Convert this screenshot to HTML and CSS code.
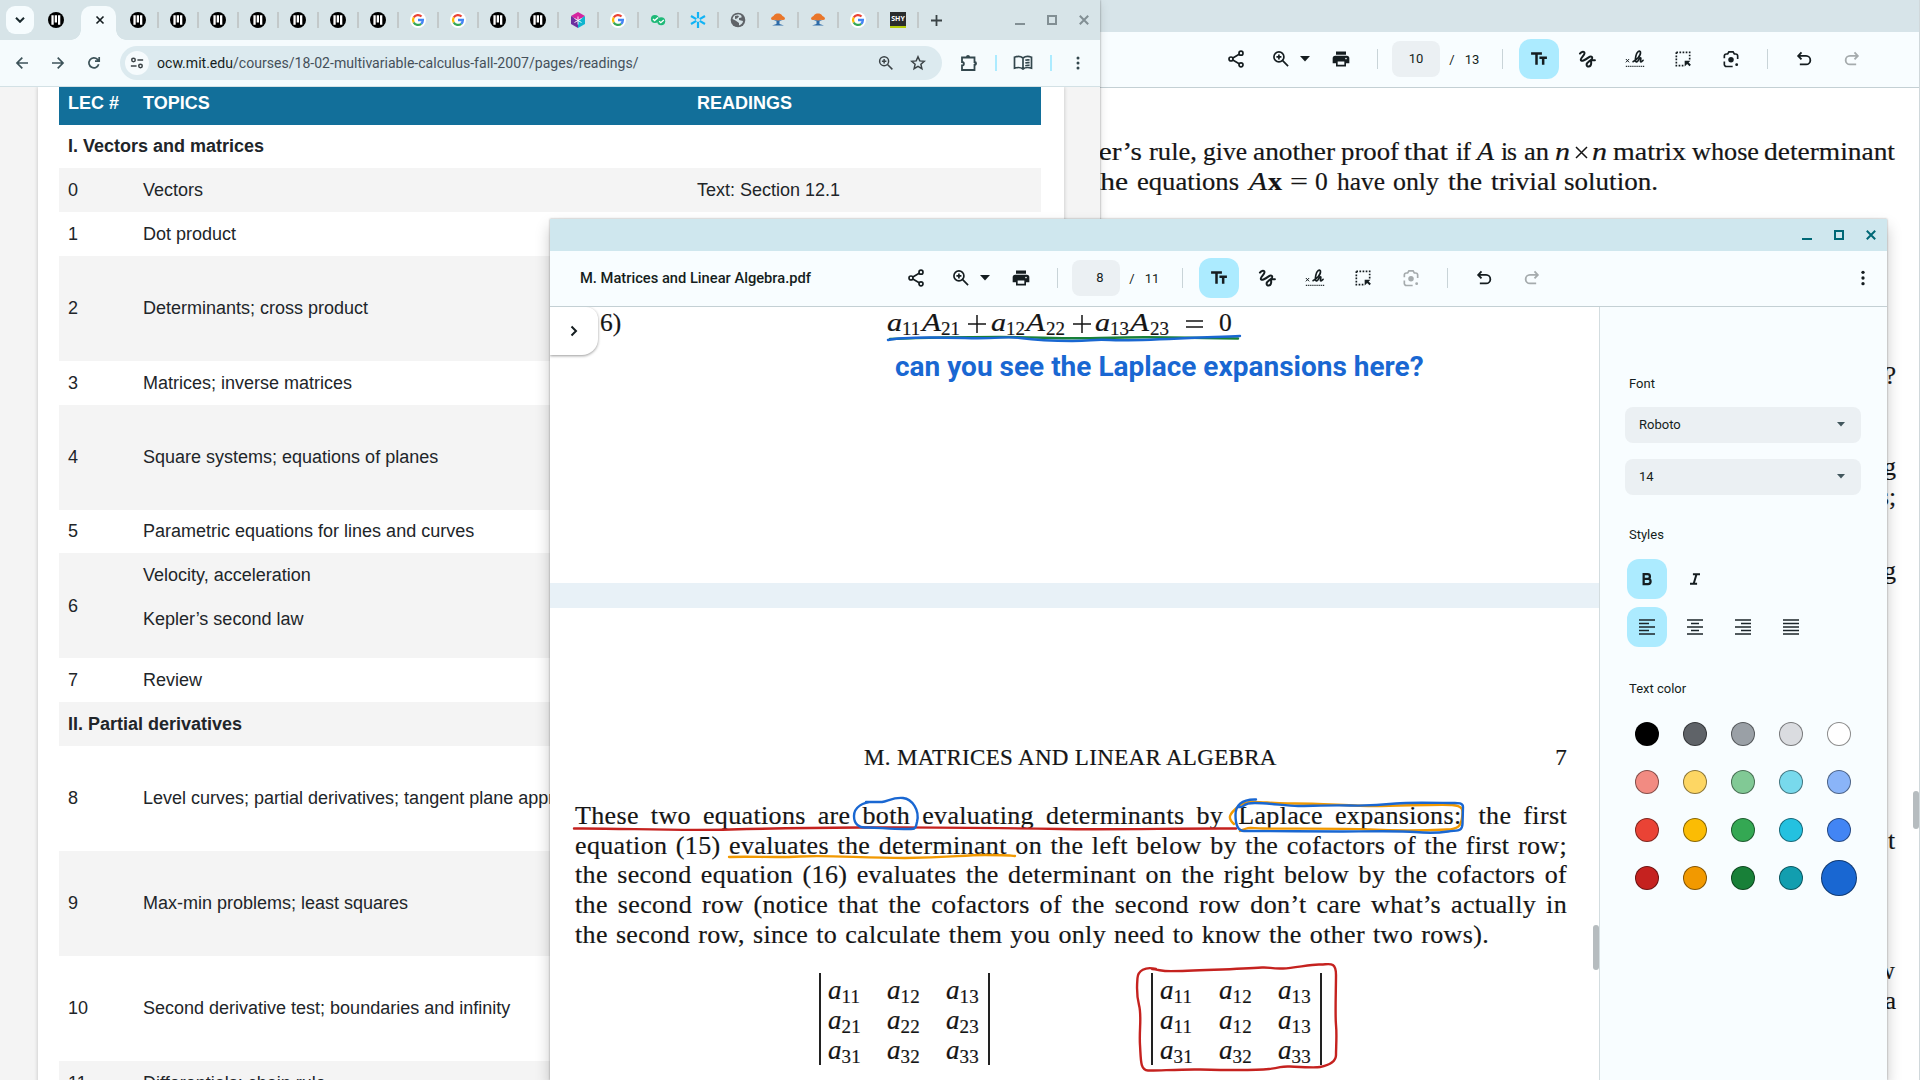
FILE: index.html
```html
<!DOCTYPE html>
<html lang="en">
<head>
<meta charset="utf-8">
<title>Desktop</title>
<link rel="stylesheet" href="styles.css">
</head>
<body>
<svg class="defs" aria-hidden="true">
  <symbol id="share" viewBox="0 0 24 24"><g fill="none" stroke="currentColor" stroke-width="2"><circle cx="18" cy="5" r="2.400"/><circle cx="6" cy="12" r="2.400"/><circle cx="18" cy="19" r="2.400"/><path d="M8.200 10.800l7.600-4.500M8.200 13.200l7.600 4.500"/></g></symbol>
  <symbol id="zoom" viewBox="0 0 24 24"><g fill="none" stroke="currentColor" stroke-width="2"><circle cx="9.500" cy="9.500" r="6"/><path d="M14 14l6.500 6.500M9.500 6.500v6M6.500 9.500h6"/></g></symbol>
  <symbol id="print" viewBox="0 0 24 24"><path fill="currentColor" d="M18 7H6V3h12v4zM19 8H5a3 3 0 0 0-3 3v6h4v4h12v-4h4v-6a3 3 0 0 0-3-3zm-3 11H8v-4h8v4zm2-6.500a1 1 0 1 1 0-2 1 1 0 0 1 0 2z"/></symbol>
  <symbol id="text" viewBox="0 0 24 24"><path fill="currentColor" d="M2.500 4v3h5v12h3V7h5V4h-13zm19 5h-9v3h3v7h3v-7h3V9z"/></symbol>
  <symbol id="ink" viewBox="0 0 24 24"><path fill="none" stroke="currentColor" stroke-width="2.400" stroke-linecap="round" d="M3.500 5.500C5.500 3 9 2.500 9 5c0 2.700-4.500 5.500-4.500 8 0 3 5.500 0 9.500-3 2.500-1.800 5-1 4 1.500C16.500 14.500 11.500 15.500 11.500 19c0 3 5 3 5.500-1.500.2-2-.5-3.500 0-4H21.500"/></symbol>
  <symbol id="sign" viewBox="0 0 24 24"><path fill="none" stroke="currentColor" stroke-width="2" d="M9 15.500c5-2 10.500-8 9.500-12-1-2.500-4.500 0-5.500 5-1 5-.5 7.500 1 7 2-.5 3-5 4.500-5s-1 5 .5 5 1.500-2 3.500-2"/><path fill="none" stroke="currentColor" stroke-width="1.200" d="M1 12l4 4M5 12l-4 4"/><path fill="none" stroke="currentColor" stroke-width="1.500" stroke-dasharray="1.300 1" d="M1 20.800h22"/></symbol>
  <symbol id="select" viewBox="0 0 24 24"><path fill="none" stroke="currentColor" stroke-width="2" stroke-dasharray="2 1.750" d="M4 4h16v9M4 4v16h10"/><path fill="currentColor" d="M14 14h7l-2.300 2.300 2.800 2.700-1.700 1.700-2.800-2.700-3 3z"/></symbol>
  <symbol id="lens" viewBox="0 0 24 24"><g fill="none" stroke="currentColor" stroke-width="2"><path d="M4 11V8.500A2.500 2.500 0 0 1 6.500 6H8l1.500-2.500h5L16 6h1.500A2.500 2.500 0 0 1 20 8.500V12M4 15v3.500A2.500 2.500 0 0 0 6.500 21H14"/></g><circle cx="12" cy="13" r="3.300" fill="currentColor"/><circle cx="18.800" cy="18.800" r="1.700" fill="currentColor"/></symbol>
  <symbol id="undo" viewBox="0 0 24 24"><path fill="none" stroke="currentColor" stroke-width="2.200" d="M9 4L5 8.300l4 4.200M5.500 8.300h9a5 5 0 0 1 0 10.200H7"/></symbol>
  <symbol id="redo" viewBox="0 0 24 24"><path fill="none" stroke="currentColor" stroke-width="2.200" d="M15 4l4 4.300-4 4.200M18.500 8.300h-9a5 5 0 0 0 0 10.200H17"/></symbol>
  <symbol id="caret" viewBox="0 0 10 6"><path fill="currentColor" d="M0 0h10L5 5.500z"/></symbol>
  <symbol id="dots" viewBox="0 0 24 24"><g fill="currentColor"><circle cx="12" cy="5.200" r="2"/><circle cx="12" cy="12" r="2"/><circle cx="12" cy="18.800" r="2"/></g></symbol>
  <symbol id="min" viewBox="0 0 12 12"><path fill="currentColor" d="M1 9h10v2H1z"/></symbol>
  <symbol id="max" viewBox="0 0 12 12"><path fill="none" stroke="currentColor" stroke-width="2" d="M2 2h8v8H2z"/></symbol>
  <symbol id="close" viewBox="0 0 12 12"><path fill="none" stroke="currentColor" stroke-width="2" d="M1.800 1.800l8.400 8.400M10.200 1.800l-8.400 8.400"/></symbol>
  <symbol id="mit" viewBox="0 0 16 16"><circle cx="8" cy="8" r="8"/><path fill="#fff" d="M3.400 3.200h2.300v9.600H3.400zM6.700 3.200H9v7.300H6.700zM10 3.200h2.300v9.600H10z"/></symbol>
  <symbol id="g" viewBox="0 0 16 16"><circle cx="8" cy="8" r="8" fill="#fff"/><g fill="none" stroke-width="2.300"><path stroke="#ea4335" d="M3.700 5.500A5 5 0 0 1 11.500 4.500"/><path stroke="#fbbc04" d="M3.700 10.500a5 5 0 0 1 0-5"/><path stroke="#34a853" d="M3.700 10.500a5 5 0 0 0 7.500 1.300"/><path stroke="#4285f4" d="M11.200 11.800A5 5 0 0 0 12.900 8H8"/></g></symbol>
  <symbol id="cube" viewBox="0 0 16 16"><path fill="#d6249f" d="M8 0l7 4-7 4.500L1 4z"/><path fill="#6d2f9f" d="M1 4l7 4.500V16l-7-4z"/><path fill="#0fb5cf" d="M15 4L8 8.500V16l7-4z"/><path stroke="#fff" stroke-width=".9" d="M8 4.500v8M4.500 6.500l7 4M11.500 6.500l-7 4"/></symbol>
  <symbol id="checks" viewBox="0 0 16 16"><g fill="#1fb978"><circle cx="4.900" cy="7" r="4"/><circle cx="11.200" cy="9.200" r="4"/></g><path fill="none" stroke="#fff" stroke-width="1.300" d="M3 7l1.600 1.500L8 5.500M9.200 9.200l1.600 1.500 3-2.800"/></symbol>
  <symbol id="snow" viewBox="0 0 16 16"><path stroke="#12b3f5" stroke-width="2.200" d="M8 0v6.300M8 9.700V16M1 4l5.300 3.100M9.700 8.900L15 12M15 4L9.700 7.100M6.300 8.900L1 12"/></symbol>
  <symbol id="globe" viewBox="0 0 16 16"><circle cx="8" cy="8" r="7.300" fill="#5f6368"/><path fill="#d6e3e7" d="M8.500 2.300C11 3 12 4 11.500 5.500L9 6v2l4 1c0 2-2 4-4 4.500L9 11 5.500 8.500 2.500 7C3 4 5 2.500 8.500 2.300z"/><path fill="#5f6368" d="M5 4l3-.5 1 1-2 2-2 .500z"/></symbol>
  <symbol id="tree" viewBox="0 0 16 16"><path fill="#e9762b" d="M1 7c0-2 1.500-2.500 2.500-3 1-2 3-2.500 4.500-2.500s3.500.5 4.500 2.500C13.500 4.500 15 5 15 7c-1 1.500-3 1-4 .8L8 9 5 7.800C4 8 2 8.500 1 7z"/><path fill="#2c6aa8" d="M3.500 8l3 1.300V12L2 13.500h12L9.500 12V9.300l3-1.300-4.500.6z"/></symbol>
  <symbol id="info" viewBox="0 0 16 16"><g fill="none" stroke="currentColor" stroke-width="1.700"><circle cx="4" cy="4.500" r="2"/><path d="M8.500 4.500H15M1 11.500h6.500"/><circle cx="12" cy="11.500" r="2"/></g></symbol>
</svg>

<!-- Document viewer at the back -->
<section class="window back">
  <div class="titlebar"></div>
  <div class="toolbar">
    <span class="doc-title"></span>
    <div class="tools">
      <svg class="i share"><use href="#share"/></svg><svg class="i zoom"><use href="#zoom"/></svg><svg class="caret"><use href="#caret"/></svg><svg class="i print"><use href="#print"/></svg>
      <i class="rule r1"></i><span class="page-no">10</span><span class="slash">/</span><span class="total">13</span><i class="rule r2"></i>
      <span class="chip"><svg class="i"><use href="#text"/></svg></span><svg class="i"><use href="#ink"/></svg><svg class="i"><use href="#sign"/></svg><svg class="i"><use href="#select"/></svg><svg class="i"><use href="#lens"/></svg>
      <i class="rule r3"></i><svg class="i undo"><use href="#undo"/></svg><svg class="i dim"><use href="#redo"/></svg>
    </div>
  </div>
  <svg class="sheet" viewBox="1090 88 829 992">
    <g class="tex">
      <text x="1084" y="159.500" textLength="58" lengthAdjust="spacingAndGlyphs">ner’s</text><text x="1149" y="159.500" textLength="48" lengthAdjust="spacingAndGlyphs">rule,</text><text x="1203" y="159.500" textLength="44" lengthAdjust="spacingAndGlyphs">give</text><text x="1253" y="159.500" textLength="82" lengthAdjust="spacingAndGlyphs">another</text><text x="1341" y="159.500" textLength="58" lengthAdjust="spacingAndGlyphs">proof</text><text x="1404" y="159.500" textLength="44" lengthAdjust="spacingAndGlyphs">that</text><text x="1456" y="159.500" textLength="15">if</text><text class="it" x="1477" y="159.500" textLength="17" lengthAdjust="spacingAndGlyphs">A</text><text x="1501" y="159.500" textLength="16">is</text><text x="1524" y="159.500" textLength="25" lengthAdjust="spacingAndGlyphs">an</text><text class="it" x="1555" y="159.500" textLength="15" lengthAdjust="spacingAndGlyphs">n</text><path d="M1576 147l11 11M1587 147l-11 11"/><text class="it" x="1592" y="159.500" textLength="15" lengthAdjust="spacingAndGlyphs">n</text><text x="1613" y="159.500" textLength="73" lengthAdjust="spacingAndGlyphs">matrix</text><text x="1692" y="159.500" textLength="67" lengthAdjust="spacingAndGlyphs">whose</text><text x="1764" y="159.500" textLength="131" lengthAdjust="spacingAndGlyphs">determinant</text>
      <text x="1092" y="189.500" textLength="36" lengthAdjust="spacingAndGlyphs">the</text><text x="1137" y="189.500" textLength="102" lengthAdjust="spacingAndGlyphs">equations</text><text class="it" x="1249" y="189.500" textLength="18" lengthAdjust="spacingAndGlyphs">A</text><text class="bf" x="1268" y="189.500" textLength="14" lengthAdjust="spacingAndGlyphs">x</text><text x="1290" y="189.500" textLength="18" lengthAdjust="spacingAndGlyphs">=</text><text x="1315" y="189.500">0</text><text x="1337" y="189.500" textLength="48" lengthAdjust="spacingAndGlyphs">have</text><text x="1393" y="189.500" textLength="46" lengthAdjust="spacingAndGlyphs">only</text><text x="1448" y="189.500" textLength="34" lengthAdjust="spacingAndGlyphs">the</text><text x="1491" y="189.500" textLength="66" lengthAdjust="spacingAndGlyphs">trivial</text><text x="1564" y="189.500" textLength="94" lengthAdjust="spacingAndGlyphs">solution.</text>
      <g text-anchor="end"><text x="1896" y="384">?</text><text x="1896" y="475">g</text><text x="1896" y="505">s;</text><text x="1896" y="579">g</text><text x="1895" y="849">t</text><text x="1895" y="979">w</text><text x="1896" y="1009">a</text></g>
    </g>
    <rect x="1913" y="791" width="6" height="38" rx="3" fill="#b6bcbf"/>
  </svg>
</section>

<!-- Browser -->
<section class="window browser">
  <div class="tabs">
    <span class="search"><svg width="10" height="6" viewBox="0 0 10 6"><path fill="none" stroke="#1b2a2e" stroke-width="2" d="M1 .8l4 4 4-4"/></svg></span>
    <span class="tab first"><svg><use href="#mit"/></svg></span>
    <span class="tab active"><svg><use href="#close"/></svg></span>
    <span class="tab"><svg><use href="#mit"/></svg></span><span class="tab"><svg><use href="#mit"/></svg></span><span class="tab"><svg><use href="#mit"/></svg></span><span class="tab"><svg><use href="#mit"/></svg></span><span class="tab"><svg><use href="#mit"/></svg></span><span class="tab"><svg><use href="#mit"/></svg></span><span class="tab"><svg><use href="#mit"/></svg></span><span class="tab"><svg><use href="#g"/></svg></span><span class="tab"><svg><use href="#g"/></svg></span><span class="tab"><svg><use href="#mit"/></svg></span><span class="tab"><svg><use href="#mit"/></svg></span><span class="tab"><svg><use href="#cube"/></svg></span><span class="tab"><svg><use href="#g"/></svg></span><span class="tab"><svg><use href="#checks"/></svg></span><span class="tab"><svg><use href="#snow"/></svg></span><span class="tab"><svg><use href="#globe"/></svg></span><span class="tab"><svg><use href="#tree"/></svg></span><span class="tab"><svg><use href="#tree"/></svg></span><span class="tab"><svg><use href="#g"/></svg></span><span class="tab"><b class="shy">SHY</b></span>
    <span class="plus"><svg width="11" height="11" viewBox="0 0 11 11"><path stroke="#3a4346" stroke-width="1.800" d="M5.500 0v11M0 5.500h11"/></svg></span>
    <div class="controls"><svg><use href="#min"/></svg><svg><use href="#max"/></svg><svg><use href="#close"/></svg></div>
  </div>
  <div class="nav">
    <div class="arrows">
      <svg viewBox="0 0 12 12"><path d="M12 6H1M6.300.7L1 6l5.300 5.300"/></svg>
      <svg viewBox="0 0 12 12"><path d="M0 6h11M5.700.7L11 6l-5.300 5.300"/></svg>
      <svg viewBox="0 0 12 12"><path d="M10.700 7.300A5 5 0 1 1 9.500 2.400L11 4M11.200 0v4.200H7"/></svg>
    </div>
    <div class="omnibox">
      <span class="site"><svg width="14" height="14"><use href="#info"/></svg></span>
      <span class="url"><b>ocw.mit.edu</b>/courses/18-02-multivariable-calculus-fall-2007/pages/readings/</span>
      <svg class="mag"><use href="#zoom"/></svg>
      <svg class="star" viewBox="0 0 16 16"><path fill="none" stroke="currentColor" stroke-width="1.500" d="M8 1.800l1.800 4.100 4.500.4-3.400 3 1 4.400L8 11.400l-3.900 2.300 1-4.400-3.400-3 4.500-.4z"/></svg>
    </div>
    <svg class="ext" viewBox="0 0 18 18"><path fill="none" stroke="currentColor" stroke-width="1.800" d="M2 3.500h12.500V8c2 0 2 3 0 3v5H2v-4.500c2.500 0 2.500-3.500 0-3.500z"/><path fill="currentColor" d="M6 3a2 2 0 0 1 4 0zM14.500 7.500a2 2 0 0 1 0 4z"/></svg>
    <i class="bar"></i>
    <svg class="book" viewBox="0 0 20 16"><path fill="none" stroke="currentColor" stroke-width="1.700" d="M10 3C8 1.500 4 1.300 1.500 2.200v11c2.500-.8 6.500-.8 8.500.8 2-1.600 6-1.600 8.500-.8v-11C16 1.300 12 1.500 10 3zv11M12.300 5.300c1.500-.5 3-.5 4.300-.3M12.300 8c1.500-.5 3-.5 4.300-.3M12.300 10.700c1.500-.5 3-.5 4.300-.3"/></svg>
    <i class="bar"></i>
    <svg class="menu"><use href="#dots"/></svg>
  </div>
  <div class="ocw">
    <div class="card">
      <table>
        <tr class="head"><th>LEC #</th><th>TOPICS</th><th>READINGS</th></tr>
        <tr class="h43"><td colspan="3"><b>I. Vectors and matrices</b></td></tr>
        <tr class="alt"><td>0</td><td>Vectors</td><td>Text: Section 12.1</td></tr>
        <tr><td>1</td><td>Dot product</td><td></td></tr>
        <tr class="alt tall"><td>2</td><td>Determinants; cross product</td><td></td></tr>
        <tr><td>3</td><td>Matrices; inverse matrices</td><td></td></tr>
        <tr class="alt tall"><td>4</td><td>Square systems; equations of planes</td><td></td></tr>
        <tr class="h43"><td>5</td><td>Parametric equations for lines and curves</td><td></td></tr>
        <tr class="alt tall split"><td>6</td><td><p>Velocity, acceleration</p><p>Kepler’s second law</p></td><td></td></tr>
        <tr><td>7</td><td>Review</td><td></td></tr>
        <tr class="alt"><td colspan="3"><b>II. Partial derivatives</b></td></tr>
        <tr class="tall"><td>8</td><td>Level curves; partial derivatives; tangent plane approximation</td><td></td></tr>
        <tr class="alt tall"><td>9</td><td>Max-min problems; least squares</td><td></td></tr>
        <tr class="tall"><td>10</td><td>Second derivative test; boundaries and infinity</td><td></td></tr>
        <tr class="alt"><td>11</td><td>Differentials; chain rule</td><td></td></tr>
      </table>
    </div>
  </div>
</section>

<!-- Annotated PDF -->
<section class="window front">
  <div class="titlebar"><div class="controls"><svg><use href="#min"/></svg><svg><use href="#max"/></svg><svg><use href="#close"/></svg></div></div>
  <div class="toolbar">
    <span class="doc-title">M. Matrices and Linear Algebra.pdf</span>
    <div class="tools">
      <svg class="i share"><use href="#share"/></svg><svg class="i zoom"><use href="#zoom"/></svg><svg class="caret"><use href="#caret"/></svg><svg class="i print"><use href="#print"/></svg>
      <i class="rule r1"></i><span class="page-no one">8</span><span class="slash">/</span><span class="total">11</span><i class="rule r2"></i>
      <span class="chip"><svg class="i"><use href="#text"/></svg></span><svg class="i"><use href="#ink"/></svg><svg class="i"><use href="#sign"/></svg><svg class="i"><use href="#select"/></svg><svg class="i dim"><use href="#lens"/></svg>
      <i class="rule r3"></i><svg class="i undo"><use href="#undo"/></svg><svg class="i dim"><use href="#redo"/></svg>
    </div>
    <svg class="i more"><use href="#dots"/></svg>
  </div>
  <div class="body">
    <div class="viewer">
      <div class="page one">
        <p class="note">can you see the Laplace expansions here?</p>
      </div>
      <div class="page two">
        <header><span>M. MATRICES AND LINEAR ALGEBRA</span><span class="folio">7</span></header>
        <div class="para">
          <p>These two equations are both evaluating determinants by <span class="lap">Laplace expansions:</span> the first</p>
          <p>equation (15) evaluates the determinant on the left below by the cofactors of the first row;</p>
          <p>the second equation (16) evaluates the determinant on the right below by the cofactors of</p>
          <p>the second row (notice that the cofactors of the second row don’t care what’s actually in</p>
          <p class="last">the second row, since to calculate them you only need to know the other two rows).</p>
        </div>
        <div class="dets">
          <div class="det"><span>a<sub>11</sub></span><span>a<sub>12</sub></span><span>a<sub>13</sub></span><span>a<sub>21</sub></span><span>a<sub>22</sub></span><span>a<sub>23</sub></span><span>a<sub>31</sub></span><span>a<sub>32</sub></span><span>a<sub>33</sub></span></div>
          <div class="det right"><span>a<sub>11</sub></span><span>a<sub>12</sub></span><span>a<sub>13</sub></span><span>a<sub>11</sub></span><span>a<sub>12</sub></span><span>a<sub>13</sub></span><span>a<sub>31</sub></span><span>a<sub>32</sub></span><span>a<sub>33</sub></span></div>
        </div>
      </div>
      <svg class="overlay" viewBox="550 307 1049 773">
        <g class="tex">
          <text x="600" y="331">6)</text>
          <g class="it"><text x="887" y="331" textLength="15" lengthAdjust="spacingAndGlyphs">a</text><text x="922" y="331" textLength="19" lengthAdjust="spacingAndGlyphs">A</text><text x="991" y="331" textLength="15" lengthAdjust="spacingAndGlyphs">a</text><text x="1026" y="331" textLength="19" lengthAdjust="spacingAndGlyphs">A</text><text x="1095" y="331" textLength="15" lengthAdjust="spacingAndGlyphs">a</text><text x="1130" y="331" textLength="19" lengthAdjust="spacingAndGlyphs">A</text></g>
          <g class="sub"><text x="902" y="335">11</text><text x="941" y="335">21</text><text x="1006" y="335">12</text><text x="1046" y="335">22</text><text x="1110" y="335">13</text><text x="1150" y="335">23</text></g>
          <text x="1219" y="331">0</text>
          <path d="M968 324h18M977 315v18M1073 324h18M1082 315v18M1186 321h17M1186 327h17"/>
        </g>
        <g class="ink">
          <path stroke="#188038" d="M890 339C940 337 960 337 1000 337S1060 339 1100 338 1140 337 1238 338.500"/>
          <path stroke="#1967d2" d="M888 340C900 337 930 337 965 338S1005 336 1020 338 1050 341 1072 341 1090 339 1110 340 1170 339 1190 338 1225 337 1240 336"/>
          <path stroke="#c5221f" d="M574 828.500C620 828 670 831 730 829.500S790 828 860 827.500 1000 828 1060 829 1180 828 1236 828.500"/>
          <path stroke="#f29900" d="M729 857C755 856 770 858 800 856.500S860 858 905 858 960 855 985 855 1005 855 1015 856"/>
          <path stroke="#1967d2" d="M876 802C862 801 854 808 854 816S859 828 866 827.500 890 829 904 829 915 829 917 822C920 810 912 799 903 798S888 801 882 802L866 802"/>
          <path stroke="#f29900" d="M1234 824C1227 818 1229 814 1239 806S1265 804 1290 803.500 1350 806 1375 806 1440 804 1452 805 1463 810 1462 818 1458 829 1447 829.500 1400 831 1370 829.500 1280 829 1263 828.500 1250 827 1240 831"/>
          <path stroke="#1967d2" d="M1256 799.500C1241 799 1235.500 806 1235.500 815S1238 831 1244 831 1320 831.500 1340 831.500 1400 830.500 1415 832 1438 833 1448 831.500 1462 832 1462.500 824L1463 807C1463 802 1457 803 1450 803S1410 802 1396 803.500 1370 806 1350 805.500 1310 806 1298 806 1270 803 1255 803 1246 808 1238 807"/>
          <path stroke="#c5221f" d="M1156 969C1145 966 1138 971 1137.500 978S1136 994 1139 1005 1139 1030 1140 1045 1140 1070 1148 1070.500 1180 1069 1200 1069.500 1255 1070.500 1269 1069 1280 1066 1290 1066.500 1315 1068 1320 1067 1336 1063 1336 1055 1337 1035 1336 1025 1336 990 1336 975 1328 965 1320 964.500 1295 968 1283 968.500 1270 967 1262 967.500 1175 972 1165 971 1155 969 1152 969"/>
        </g>
      </svg>
      <span class="expand"><svg width="8" height="12" viewBox="0 0 8 12"><path fill="none" stroke="#151d20" stroke-width="2" d="M1.500 1.500L6 6l-4.500 4.500"/></svg></span>
      <i class="thumb"></i>
    </div>
    <aside class="panel">
      <h2>Font</h2>
      <div class="select">Roboto<svg><use href="#caret"/></svg></div>
      <div class="select">14<svg><use href="#caret"/></svg></div>
      <h2 class="styles">Styles</h2>
      <div class="row">
        <span class="btn on"><svg class="bi" viewBox="0 0 24 24"><path fill="none" stroke="currentColor" stroke-width="2.700" d="M8 6.200h4.700a2.800 2.800 0 0 1 0 5.600H8h5.200a3.100 3.100 0 0 1 0 6.200H8zV18"/></svg></span>
        <span class="btn"><svg class="bi" viewBox="0 0 24 24"><path fill="none" stroke="currentColor" stroke-width="2.400" d="M9.500 6.200H18M6 17.800h8.500M13.800 6.200l-3.400 11.600"/></svg></span>
      </div>
      <div class="row">
        <span class="btn on"><svg class="al" viewBox="0 0 16 16"><path d="M0 1h16M0 4.500h10M0 8h16M0 11.500h10M0 15h16"/></svg></span>
        <span class="btn"><svg class="al" viewBox="0 0 16 16"><path d="M0 1h16M4 4.500h8M0 8h16M4 11.500h8M0 15h16"/></svg></span>
        <span class="btn"><svg class="al" viewBox="0 0 16 16"><path d="M0 1h16M6 4.500h10M0 8h16M6 11.500h10M0 15h16"/></svg></span>
        <span class="btn"><svg class="al" viewBox="0 0 16 16"><path d="M0 1h16M0 4.500h16M0 8h16M0 11.500h16M0 15h16"/></svg></span>
      </div>
      <h2 class="color">Text color</h2>
      <div class="swatches">
        <i style="background:#000"></i><i style="background:#5f6368"></i><i style="background:#9aa0a6"></i><i style="background:#dadce0"></i><i style="background:#fff"></i>
        <i style="background:#f28b82"></i><i style="background:#fdd663"></i><i style="background:#81c995"></i><i style="background:#78d9ec"></i><i style="background:#8ab4f8"></i>
        <i style="background:#ea4335"></i><i style="background:#fbbc04"></i><i style="background:#34a853"></i><i style="background:#24c1e0"></i><i style="background:#4285f4"></i>
        <i style="background:#c5221f"></i><i style="background:#f29900"></i><i style="background:#188038"></i><i style="background:#129eaf"></i><i class="sel" style="background:#1967d2"></i>
      </div>
    </aside>
  </div>
</section>
</body>
</html>
```
FILE: styles.css
```css
* { box-sizing: border-box; }
body { margin: 0; width: 1920px; height: 1080px; position: relative; overflow: hidden; background: #fff; font-family: Roboto, sans-serif; color: #151d20; }
.defs { position: absolute; width: 0; height: 0; }
svg { display: block; flex: none; }

.window { position: absolute; overflow: hidden; display: flex; flex-direction: column; }
.back { left: 1090px; top: 0; width: 830px; height: 1080px; background: #fff; border-right: 1px solid #d0d8db; }
.browser { left: 0; top: 0; width: 1100px; height: 1080px; background: #f4f4f4; box-shadow: 0 0 2px rgba(0,0,0,.4), 0 4px 10px rgba(0,0,0,.12); }
.front { left: 550px; top: 219px; width: 1337px; height: 861px; background: #fff; overflow: visible; box-shadow: 0 0 2px rgba(0,0,0,.35), 0 8px 14px rgba(0,0,0,.22); }

.titlebar { height: 32px; flex: none; background: #d7e4e9; display: flex; justify-content: flex-end; }
.front .titlebar { background: #cfe7ee; }
.controls { display: flex; align-items: center; gap: 20px; color: #828f94; }
.controls svg { width: 12px; height: 12px; }
.front .controls { color: #006876; padding-right: 10px; }

.toolbar { height: 56px; flex: none; background: #f8fdff; border-bottom: 1px solid #c4d0d4; display: flex; align-items: center; padding-bottom: 1px; }
.doc-title { width: 324px; padding-left: 30px; font-size: 14.700px; font-weight: 500; white-space: nowrap; }
.back .doc-title { width: 104px; padding: 0; }
.tools { display: flex; align-items: center; }
.i { width: 20px; height: 20px; }
.tools > .i { margin-left: 28px; }
.tools > .share { margin-left: 32px; }
.tools > .zoom { margin-left: 25px; }
.tools > .caret { width: 10px; height: 6px; margin-left: 9px; }
.tools > .print { margin-left: 21px; }
.rule { width: 1px; height: 20px; background: #c9d4d8; }
.r1 { margin-left: 26px; }
.page-no { width: 48px; height: 36px; margin-left: 14px; border-radius: 8px; background: #ebf0f3; font-size: 13px; line-height: 36px; text-align: center; }
.page-no.one { padding-left: 8px; }
.slash { width: 24px; text-align: center; font-size: 13px; }
.total { width: 16px; text-align: center; font-size: 13px; }
.r2 { margin-left: 22px; }
.chip { width: 40px; height: 40px; margin: 0 -10px 0 16px; border-radius: 12px; background: #acebff; display: grid; place-items: center; }
.r3 { margin-left: 26px; }
.tools > .undo { margin-left: 26px; }
.dim { color: #a5abad; }
.more { margin-left: auto; margin-right: 14px; }

.sheet { width: 829px; height: 992px; }
.tex { font: 25.500px "Liberation Serif", serif; fill: #151515; stroke: #151515; stroke-width: .2px; }
.tex .it { font-style: italic; }
.tex .bf { font-weight: bold; }
.tex .sub { font-size: 19px; }
.tex path { fill: none; stroke: #151515; stroke-width: 1.500; }

.tabs { height: 40px; flex: none; background: #d7e4e8; display: flex; align-items: center; }
.search { width: 28px; height: 28px; margin-left: 6px; border-radius: 9px; background: #f6fcfe; display: grid; place-items: center; }
.tab { width: 40px; height: 16px; border-right: 2px solid #c3c9ca; display: grid; place-items: center; }
.tab svg { width: 16px; height: 16px; }
.tab.first { margin-left: 3px; border: 0; width: 38px; }
.tab.active { position: relative; width: 35px; height: 34px; margin: 6px 3px 0 6px; border: 0; border-radius: 10px 10px 0 0; background: #f5fbfd; place-items: start end; padding: 9px 11px; }
.tab.active::before, .tab.active::after { content: ""; position: absolute; bottom: 0; left: -10px; width: 10px; height: 10px; background: radial-gradient(circle at 0 0, transparent 9.500px, #f5fbfd 10px); }
.tab.active::after { left: 35px; background: radial-gradient(circle at 100% 0, transparent 9.500px, #f5fbfd 10px); }
.tab.active svg { width: 10px; height: 10px; }
.shy { width: 16px; height: 16px; background: #2a2c2d; border-bottom: 2px solid #b4cc0a; color: #fff; font: bold 7px/13px "Open Sans", sans-serif; text-align: center; }
.plus { margin-left: 12px; }
.browser .controls { margin-left: auto; padding-right: 10px; }

.nav { height: 47px; flex: none; background: #f5fbfd; border-bottom: 1px solid #d3e1e5; display: flex; align-items: center; color: #33474d; }
.arrows { display: flex; gap: 24px; margin-left: 16px; width: 104px; }
.arrows svg { width: 12px; height: 12px; fill: none; stroke: #3d5359; stroke-width: 1.700; overflow: visible; }
.omnibox { width: 822px; height: 34px; border-radius: 17px; background: #dceaef; display: flex; align-items: center; padding: 0 16px 0 5px; color: #3b4346; }
.site { width: 24px; height: 24px; border-radius: 50%; background: #f6fbfd; display: grid; place-items: center; }
.url { margin-left: 8px; flex: 1; font-size: 14.070px; white-space: nowrap; color: #45505a; }
.url b { font-weight: 400; color: #151d20; }
.mag { width: 18px; height: 18px; margin-right: 15px; }
.star { width: 16px; height: 16px; }
.ext { width: 18px; height: 18px; margin-left: 18px; }
.bar { width: 2px; height: 16px; background: #acebff; margin-left: 17px; }
.book { width: 20px; height: 16px; margin-left: 16px; }
.menu { width: 18px; height: 18px; margin-left: 17px; }

.ocw { flex: 1; overflow: hidden; padding-left: 38px; }
.card { width: 1026px; height: 1000px; background: #fff; padding: 0 0 0 21px; box-shadow: 0 0 4px rgba(0,0,0,.22); }
table { width: 982px; table-layout: fixed; border-collapse: collapse; font: 18px "Liberation Sans", Arial, sans-serif; color: #212529; }
th { height: 38px; padding: 0 0 6px 9px; text-align: left; background: #126f9a; color: #fff; }
th:first-child { width: 75px; }
th:nth-child(2) { width: 554px; }
td { height: 44px; padding: 1px 0 0 9px; white-space: nowrap; }
.h43 td { height: 43px; padding: 0 0 1px 9px; }
.tall td { height: 105px; padding: 0 0 1px 9px; }
.split td:first-child { padding: 1px 0 0 9px; }
.alt { background: #f4f4f4; }
td p { margin: 0; height: 44px; line-height: 44px; }
td p:last-child { margin-bottom: 16px; }

.body { flex: 1; display: flex; min-height: 0; }
.viewer { width: 1050px; flex: none; position: relative; overflow: hidden; background: #e8f1f7; border-right: 1px solid #d3dde0; }
.page { background: #fff; }
.page.one { height: 276px; padding: 43px 0 0 345px; }
.page.two { height: 472px; margin-top: 25px; padding: 135px 32px 0 25px; font-family: "Liberation Serif", serif; color: #151515; -webkit-text-stroke: .2px #151515; }
.note { margin: 0; font: bold 28px/34px Roboto, sans-serif; color: #1967d2; white-space: nowrap; }
.page header { display: flex; font-size: 23px; line-height: 30px; padding-left: 289px; white-space: nowrap; letter-spacing: .320px; }
.folio { margin-left: auto; }
.para { margin-top: 28px; font-size: 26px; line-height: 29.700px; letter-spacing: .350px; }
.para p { margin: 0; text-align-last: justify; white-space: nowrap; }
.para .last { width: 914px; }
.lap { margin: 0 5px 0 3px; }
.dets { display: flex; margin: 23px 0 0 244px; gap: 161px; }
.det { width: 171px; height: 92px; border: solid #222; border-width: 0 2px; display: grid; grid-template-columns: repeat(3, 59px); grid-auto-rows: 30.300px; padding: 2px 0 0 7px; font-size: 27px; line-height: 30px; font-style: italic; }
.det span { width: 34px; white-space: nowrap; }
.det sub { font-size: 19px; font-style: normal; vertical-align: -4px; line-height: 0; letter-spacing: .3px; }
.overlay { position: absolute; inset: 0 auto auto 0; width: 1049px; height: 773px; }
.ink { fill: none; stroke-width: 2.400; stroke-linecap: round; stroke-linejoin: round; }
.expand { position: absolute; left: 0; top: 0; width: 48px; height: 48px; border-radius: 0 12px 16px 0; background: #fff; box-shadow: 0 1px 3px rgba(0,0,0,.4); display: grid; place-items: center; }
.thumb { position: absolute; right: 0; top: 618px; width: 6px; height: 45px; border-radius: 3px; background: #b6bcbf; }

.panel { flex: 1; min-width: 0; background: #f8fdff; padding: 68px 26px 0 25px; }
.panel h2 { margin: 0 0 14px 4px; font-size: 13px; line-height: 18px; font-weight: 400; }
.select { height: 36px; margin-bottom: 16px; border-radius: 8px; background: #ebf0f3; padding: 0 16px 1px 14px; display: flex; align-items: center; justify-content: space-between; font-size: 13px; }
.select svg { width: 8px; height: 5px; color: #42575d; }
.panel h2.styles { margin: 31px 0 15px 4px; }
.row { display: flex; gap: 8px; margin: 0 0 8px 2px; }
.btn { width: 40px; height: 40px; border-radius: 12px; display: grid; place-items: center; }
.on { background: #acebff; }
.bi { width: 20px; height: 20px; }
.al { width: 16px; height: 16px; fill: none; stroke: #1b2529; stroke-width: 1.500; }
.panel h2.color { margin: 33px 0 25px 4px; }
.swatches { display: grid; grid-template-columns: repeat(5, 48px); grid-auto-rows: 48px; place-items: center; margin: -13px 0 0 -2px; }
.swatches i { width: 24px; height: 24px; border-radius: 50%; border: 1px solid rgba(0,0,0,.45); }
.swatches .sel { width: 36px; height: 36px; }
```
